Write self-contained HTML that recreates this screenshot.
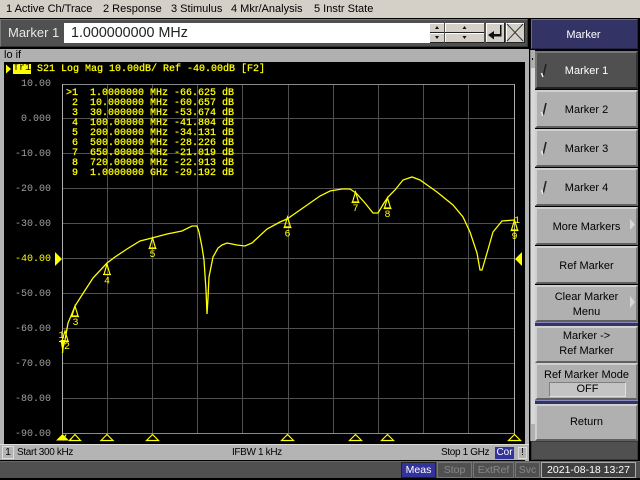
<!DOCTYPE html>
<html><head><meta charset="utf-8"><style>
html,body{margin:0;padding:0;background:#000;}
#p{position:relative;width:640px;height:480px;overflow:hidden;background:#000;font-family:"Liberation Sans",sans-serif;font-size:11px;}
#p div{position:absolute;box-sizing:border-box;white-space:pre;}
.mn{top:2px;color:#000;height:15px;line-height:15px;}
.yl{left:0;width:51px;text-align:right;font-family:"Liberation Mono",monospace;font-size:10px;line-height:12px;height:12px;color:#a0a0a0;}
.sk{left:535px;width:103px;background:#b0b0b0;color:#000;text-align:center;border:2px solid;border-color:#d0d0d0 #787878 #606060 #d0d0d0;}
.sk span{position:absolute;left:0;width:100%;text-align:center;line-height:15px;}
.st{top:462px;height:16px;line-height:14px;text-align:center;border:1px solid #777;color:#888;background:#505050;font-size:10.500px;}
.sb{color:#000;line-height:15px;height:15px;top:445px;font-size:10px;letter-spacing:-.35px;}
.ye{-webkit-text-stroke:.25px #ffff00;}
</style></head><body><div id="p">
<div style="left:0;top:0;width:640px;height:18px;background:#d4d0c8"></div>
<div class="mn" style="left:6px">1 Active Ch/Trace</div>
<div class="mn" style="left:103px">2 Response</div>
<div class="mn" style="left:171px">3 Stimulus</div>
<div class="mn" style="left:231px">4 Mkr/Analysis</div>
<div class="mn" style="left:314px">5 Instr State</div>

<div style="left:0;top:19px;width:528px;height:28px;background:#505050;border:1px solid;border-color:#777 #333 #333 #777"></div>
<div style="left:8px;top:24px;color:#e8e8e8;font-size:13px;line-height:18px;height:18px">Marker 1</div>
<div style="left:64px;top:23px;width:366px;height:20px;background:#fff"></div>
<div style="left:71px;top:25px;color:#222;font-size:14.300px;line-height:17px;height:17px">1.000000000 MHz</div>
<div style="left:430px;top:23px;width:94px;height:20px;background:#505050"></div>
<svg style="position:absolute;left:430px;top:23px" width="96" height="21">
<g fill="#d4d0c8"><rect x="0" y="0" width="14" height="9"/><rect x="0" y="10" width="14" height="9"/><rect x="15" y="0" width="39" height="9"/><rect x="15" y="10" width="39" height="9"/><rect x="56" y="0" width="18" height="19"/><rect x="76" y="0" width="18" height="19"/></g>
<g fill="none" stroke="#fff"><path d="M0 .5H14M0 10.500H14M15 .5H54M15 10.500H54M56 .5H74M76 .5H94M56.500 0V19M76.500 0V19M15.500 0V19"/></g>
<g fill="none" stroke="#222"><path d="M0 9.500H14M0 19.500H14M15 9.500H54M15 19.500H54M74.500 0V20M94.500 0V20M56 19.500H75M76 19.500H95"/></g>
<g fill="#111"><path d="M7 3l-2 3h4zM7 16l-2-3h4zM34.500 3l-2 3h4zM34.500 16l-2-3h4z"/><path d="M58 12l6-4v3h6V2h1.500v11.500H64v3z"/></g>
<path d="M77 1L93 18M93 1L77 18" stroke="#333" fill="none"/></svg>

<div style="left:0;top:47px;width:529px;height:3px;background:#000"></div>
<div style="left:0;top:49px;width:525px;height:13px;background:#b0b0b0;color:#000;padding-left:4px;line-height:13px;font-size:11px">lo if</div>
<div style="left:0;top:62px;width:4px;height:382px;background:#b4b4b4"></div>
<div style="left:525px;top:49px;width:4px;height:412px;background:#b0b0b0"></div>

<svg style="position:absolute;left:0;top:0" width="530" height="450" shape-rendering="crispEdges">
<g stroke="#505050" fill="none"><path d="M107.500 84V433M152.500 84V433M197.500 84V433M242.500 84V433M288.500 84V433M333.500 84V433M378.500 84V433M423.500 84V433M468.500 84V433"/><path d="M62 118.500H514M62 153.500H514M62 188.500H514M62 223.500H514M62 258.500H514M62 293.500H514M62 328.500H514M62 363.500H514M62 398.500H514"/></g>
<path d="M62 84.500H514.500M62 433.500H514.500" stroke="#8a8a8a" fill="none"/>
<path d="M62.500 84V434M514.500 84V434" stroke="#b0b0b0" fill="none"/>
</svg>

<svg style="position:absolute;left:0;top:0" width="530" height="450">
<path fill="none" stroke="#ffff00" stroke-width="1.300" d="M62.500 353L63 348L65 340L68 323L71 316L75 306L82 295L93 278L107 263L115 257L127 249L140 241L152 238L167 234L182 231L192 226L197 226L199 232L202 247L204 260L206 290L207 314L208 298L209 277L213 257L218 248L222 245L227 243L232 244L237 245L245 246L252 243L267 229L280 222L287 219L300 210L320 196L330 191L342 189L350 189L356 193L365 203L373 213L378 213L384 203L388 197L395 190L403 180L412 177L420 180L437 192L453 205L463 217L470 232L477 253L480 270L482 270L487 253L493 232L502 221L514 220"/>
<g fill="none" stroke="#ffff00" stroke-width="1.200">
<path d="M65 331l-3 10h6zM61 341.500h8"/>
<path d="M75 306l-3 10h6zM71 316.500h8"/>
<path d="M107 264l-3 10.500h6zM103 274.500h8"/>
<path d="M152.500 238l-3 10h6zM148.500 248.500h8"/>
<path d="M287.500 217l-3 10h6zM283.500 227.500h8"/>
<path d="M355.500 192l-3 10h6zM351.500 202.500h8"/>
<path d="M387.500 198l-3 10h6zM383.500 208.500h8"/>
<path d="M514.500 220l-3 10h6zM510.500 230.500h8"/>
<path d="M59 341.500h8"/>
<path d="M107 434.500l-6 6h12zM152.500 434.500l-6 6h12zM287.500 434.500l-6 6h12zM355.500 434.500l-6 6h12zM387.500 434.500l-6 6h12zM514.500 434.500l-6 6h12zM75 434.500l-5.500 6h11zM66 434.500l-3 6"/>
</g>
<path d="M62.500 352l-2-12h4zM62.500 434l-6.500 6.500h13z" fill="#ffff00"/>
<circle cx="70.500" cy="439.500" r="1" fill="#ffff00"/>
<path d="M6 64.500v9l5-4.500z" fill="#ffff00"/>
<path d="M55 252v14l7-7zM522 252v14l-7-7z" fill="#ffff00"/>
<g fill="#ffff00" font-family="Liberation Mono,monospace" font-size="10" text-anchor="middle">
<text x="61.500" y="338">1</text><text x="67" y="349">2</text><text x="75.500" y="325">3</text><text x="107" y="283.500">4</text><text x="152.500" y="257">5</text><text x="287.500" y="236.500">6</text><text x="355.500" y="211">7</text><text x="387.500" y="217">8</text><text x="514.500" y="239">9</text><text x="517" y="223">1</text>
</g></svg>

<div style="left:13px;top:64px;width:18px;height:10px;background:#ffff00;color:#000;font-family:'Liberation Mono',monospace;font-size:10px;line-height:10px;text-align:center">Tr1</div>
<div class="ye" style="left:37px;top:63px;height:12px;color:#ffff00;font-family:'Liberation Mono',monospace;font-size:10px;line-height:13px">S21 Log Mag 10.00dB/ Ref -40.00dB [F2]</div>

<div class="yl" style="top:79px">10.00</div>
<div class="yl" style="top:114px">0.000</div>
<div class="yl" style="top:149px">-10.00</div>
<div class="yl" style="top:184px">-20.00</div>
<div class="yl" style="top:219px">-30.00</div>
<div class="yl" style="top:254px;color:#ffff00">-40.00</div>
<div class="yl" style="top:289px">-50.00</div>
<div class="yl" style="top:324px">-60.00</div>
<div class="yl" style="top:359px">-70.00</div>
<div class="yl" style="top:394px">-80.00</div>
<div class="yl" style="top:429px">-90.00</div>

<div class="ye" style="left:66px;top:87px;padding-top:2px;color:#ffff00;font-family:'Liberation Mono',monospace;font-size:10px;line-height:10px;height:94px">&gt;1  1.0000000 MHz -66.625 dB
 2  10.000000 MHz -60.657 dB
 3  30.000000 MHz -53.674 dB
 4  100.00000 MHz -41.804 dB
 5  200.00000 MHz -34.131 dB
 6  500.00000 MHz -28.226 dB
 7  650.00000 MHz -21.019 dB
 8  720.00000 MHz -22.913 dB
 9  1.0000000 GHz -29.192 dB</div>

<div style="left:0;top:444px;width:529px;height:16px;background:#b4b4b4;border-top:1px solid #ddd"></div>
<div style="left:2px;top:446px;width:12px;height:13px;border:1px solid #ddd;color:#000;line-height:12px;text-align:center;font-size:10px">1</div>
<div class="sb" style="left:17px">Start 300 kHz</div>
<div class="sb" style="left:232px">IFBW 1 kHz</div>
<div class="sb" style="left:441px">Stop 1 GHz</div>
<div style="left:495px;top:447px;width:19px;height:12px;background:#333399;color:#fff;line-height:12px;text-align:center;font-size:10px">Cor</div>
<div style="left:518px;top:447px;width:9px;height:12px;border:1px solid #ddd;color:#000;line-height:10px;text-align:center;font-size:10px">!</div>

<div style="left:0;top:461px;width:640px;height:17px;background:#505050;border-top:1px solid #666"></div>
<div class="st" style="left:401px;width:35px;background:#333399;color:#fff;border-color:#222">Meas</div>
<div class="st" style="left:437px;width:35px;">Stop</div>
<div class="st" style="left:473px;width:41px;">ExtRef</div>
<div class="st" style="left:515px;width:25px;">Svc</div>
<div class="st" style="left:541px;width:95px;color:#fff;border-color:#aaa;background:#404040">2021-08-18 13:27</div>

<div style="left:531px;top:19px;width:107px;height:30px;background:#333366;border:1px solid;border-color:#6a6aa0 #22224a #22224a #6a6aa0;color:#fff;text-align:center;line-height:30px;padding-right:2px">Marker</div>
<div style="left:530px;top:50px;width:5px;height:391px;background:#d8d8d8;border-left:1px solid #888"></div>
<div style="left:531px;top:50px;width:4px;height:18px;background:#b0b0b0"></div>
<div style="left:532px;top:58px;width:1px;height:2px;background:#000"></div>
<div style="left:531px;top:424px;width:4px;height:17px;background:#b0b0b0"></div>

<div class="sk" style="top:51px;height:38px;background:#505050;color:#fff;border-color:#777 #333 #222 #777"><span style="top:11px">Marker 1</span></div>
<div class="sk" style="top:90px;height:38px"><span style="top:11px">Marker 2</span></div>
<div class="sk" style="top:129px;height:38px"><span style="top:11px">Marker 3</span></div>
<div class="sk" style="top:168px;height:38px"><span style="top:11px">Marker 4</span></div>
<div class="sk" style="top:207px;height:38px"><span style="top:11px">More Markers</span></div>
<div class="sk" style="top:246px;height:38px"><span style="top:11px">Ref Marker</span></div>
<div class="sk" style="top:285px;height:37px"><span style="top:3px">Clear Marker</span><span style="top:18px">Menu</span></div>
<div style="left:535px;top:322px;width:103px;height:4px;background:#333366;border-top:1px solid #8888bb"></div>
<div class="sk" style="top:326px;height:37px"><span style="top:1px">Marker -&gt;</span><span style="top:16px">Ref Marker</span></div>
<div class="sk" style="top:363px;height:37px"><span style="top:3px">Ref Marker Mode</span></div>
<div style="left:549px;top:382px;width:77px;height:15px;background:#c4c4c4;border:1px solid;border-color:#808080 #e0e0e0 #e0e0e0 #808080;color:#000;text-align:center;line-height:13px;font-size:11px">OFF</div>
<div style="left:535px;top:400px;width:103px;height:4px;background:#333366;border-top:1px solid #8888bb"></div>
<div class="sk" style="top:404px;height:37px"><span style="top:9px">Return</span></div>
<div style="left:531px;top:441px;width:107px;height:19px;background:#505050;border:1px solid #3a3a3a"></div>

<svg style="position:absolute;left:530px;top:50px" width="110" height="390">
<g fill="none" stroke="#222" stroke-width="1.600"><path d="M13 27l3-13M13 66l3-13M13 105l3-13M13 144l3-13"/></g>
<g fill="none" stroke="#eee" stroke-width="1.600"><path d="M11.500 23l1.500 4M11.500 62l1.500 4M11.500 101l1.500 4M11.500 140l1.500 4"/></g>
<g fill="#d8d8d8"><path d="M100 169v11l5-5.500zM100 246v12l5-6z"/></g>
</svg>
</div></body></html>
